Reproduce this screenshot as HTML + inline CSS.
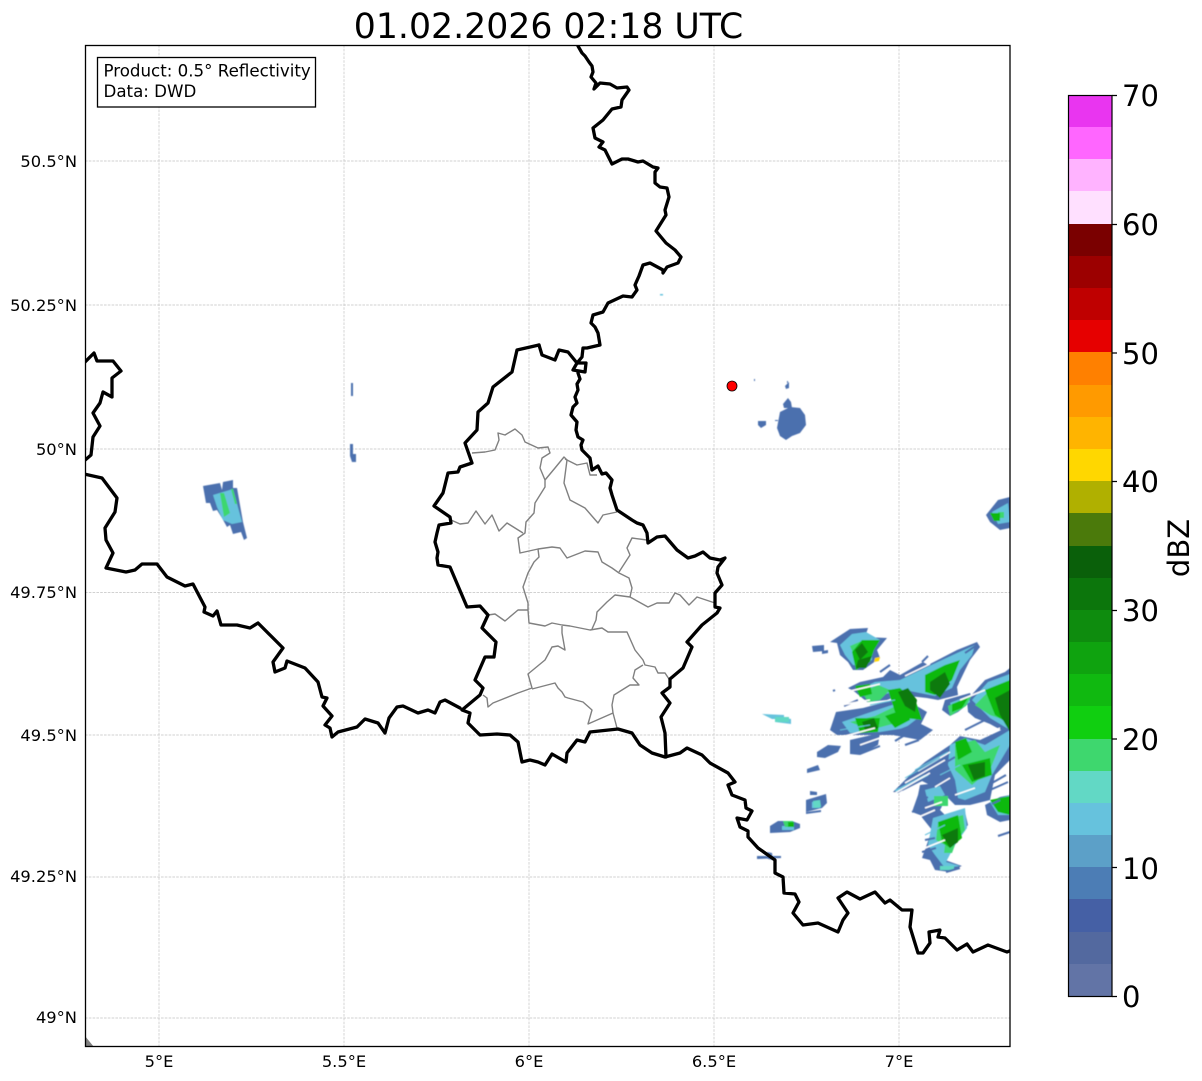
<!DOCTYPE html>
<html><head><meta charset="utf-8"><style>
html,body{margin:0;padding:0;background:#fff}
svg{display:block}
text{font-family:"DejaVu Sans",sans-serif;fill:#000}
.b{fill:none;stroke:#000;stroke-width:3.3;stroke-linejoin:round;stroke-linecap:round}
.g{fill:none;stroke:#808080;stroke-width:1.4;stroke-linejoin:round}
.gr{stroke:#c2c2c2;stroke-width:.7;stroke-dasharray:2.6 1.2}
.t{font-size:16.3px}
.l{font-size:16.67px}
</style></head><body>
<svg width="1202" height="1081" viewBox="0 0 1202 1081" xmlns="http://www.w3.org/2000/svg">
<defs><filter id="s" x="-5%" y="-5%" width="110%" height="110%"><feGaussianBlur stdDeviation="0.45"/></filter></defs>
<rect width="1202" height="1081" fill="#fff"/>
<text x="548.5" y="38" font-size="34.7" text-anchor="middle">01.02.2026 02:18 UTC</text>
<svg x="85.5" y="45.5" width="925" height="1001" viewBox="85.5 45.5 925 1001">
<g class="gr">
<path d="M159 45V1046M344 45V1046M529 45V1046M714 45V1046M899 45V1046"/>
<path d="M85 161H1010M85 305H1010M85 449H1010M85 592.5H1010M85 735H1010M85 877H1010M85 1018H1010"/>
</g>
<!-- radar -->
<g id="radar" filter="url(#s)">
<g fill="#4c70ae">
<polygon points="203,486 220,483 222,490 223,482 233,480 233,488 237,488 243,522 247,538 244,540 241,532 233,534 230,525 227,527 222,518 217,510 213,511 210,503 206,503"/>
<path d="M351 383h2v13h-2zM350 444h3v10h3v8h-4l-2-6z"/>
<polygon points="780,412 790,407 800,408 805,415 806,425 800,433 792,436 786,440 780,436 777,428"/>
<polygon points="758,421 766,421 766,425 761,428 758,425"/>
<polygon points="785,386 789,382 789,388 786,389"/>
<polygon points="783,404 788,398 791,402 792,408 784,408"/>
<path d="M754 379h1v2h-1zM787 381h1v2h-1zM775 420h3v1h-3z"/>
<polygon points="986,515 998,500 1010,497 1010,528 1000,530 990,522"/>
<polygon points="830,642 850,629 868,628 865,637 887,638 877,650 880,658 863,670 853,670 848,662 840,655 837,643"/>
<path d="M812 646l12-1 0 6-11 1zM822 651l6-1v3l-6 1z"/>
<polygon points="848,688 860,682 883,677 890,670 900,675 923,662 928,665 957,650 977,642 980,647 970,660 957,687 958,695 938,700 927,698 900,695 887,700 867,702 855,692"/>
<polygon points="836,712 863,708 893,700 910,702 927,712 921,724 933,730 920,740 893,735 867,735 837,735 830,730"/>
<polygon points="850,740 880,733 878,745 860,755 850,754"/>
<polygon points="817,752 828,745 841,746 838,752 825,758 817,757"/>
<polygon points="807,769 818,765 820,770 807,773"/>
<polygon points="806,800 826,794 827,803 822,808 806,812"/>
<path d="M810 791l7 1v3l-7 0zM806 812l15-2v2l-15 2z"/>
<polygon points="770,826 778,821 792,821 800,824 800,828 790,832 770,833"/>
<path d="M757 856h24v2l-24 1zM767 852l5 1 1 7-5-1z"/>
<polygon points="967,700 985,680 1005,672 1010,668 1010,735 990,724 975,718 968,712"/>
<polygon points="893,792 910,775 925,762 950,745 960,736 980,740 1010,726 1010,760 995,775 990,800 970,805 955,805 940,790 920,780 898,793"/>
<polygon points="920,785 945,782 948,795 940,810 950,820 965,812 968,825 960,835 945,860 962,866 950,872 935,870 930,860 922,858 932,830 920,815 912,812 918,795"/>
<polygon points="945,700 970,693 973,700 958,712 950,716 942,710"/>
<polygon points="985,805 1000,797 1010,795 1010,820 1000,822 987,815"/>
</g>
<g fill="#66c2dd">
<polygon points="213,495 233,489 242,522 232,524 223,520 217,507"/>
<polygon points="840,645 852,634 866,632 880,640 872,652 872,660 860,666 853,665 845,655"/>
<polygon points="858,690 875,682 900,680 925,668 955,654 975,645 972,655 960,670 952,688 935,696 905,690 880,695 866,695"/>
<polygon points="842,722 865,714 895,704 912,706 918,718 905,728 880,732 850,733"/>
<polygon points="972,700 988,682 1010,674 1010,730 990,718"/>
<polygon points="950,745 965,738 985,745 1010,730 1010,745 992,775 985,792 965,800 958,798 955,780 948,765"/>
<polygon points="925,790 940,786 945,795 928,802"/>
<polygon points="933,818 965,808 967,828 955,845 946,862 960,866 945,868 935,855 928,845"/>
<polygon points="950,703 968,696 970,702 955,712"/>
<polygon points="990,802 1010,795 1010,815 998,815"/>
<polygon points="992,512 1008,503 1010,522 998,524"/>
<path d="M660 294h3v1.500h-3zM895 790l35-18-2 4-32 16zM762 714l22 1v4l-12 0zM775 716l16 3v5l-16-2zM812 802h8v6h-8zM782 826h12v4h-12z"/>
</g>
<g fill="#62d8c5">
<path d="M813 801l7-1 1 7-7 1zM775 717h14v5h-14zM940 866h14v4h-14z"/>
</g>
<g fill="#3ed76e">
<polygon points="220,493 224,493 230,513 224,517"/>
<path d="M231 489l2 0 4 15-2 0zM783 821h10v6h-8zM945 845h10l-3 8h-8zM850 646l14-6 3 7-14 6zM998 512h6v6h-6zM934 796h14v10h-14z"/>
<polygon points="862,692 878,685 890,690 880,700 868,702"/>
<polygon points="948,706 972,695 966,706 950,716"/>
<polygon points="850,722 875,716 896,706 906,710 900,722 870,730"/>
<polygon points="975,705 990,690 1010,685 1010,722 990,715"/>
<polygon points="955,745 975,740 985,752 1000,745 990,770 972,785 955,770"/>
<polygon points="938,822 963,815 965,830 950,848 936,840"/>
</g>
<g fill="#10b910">
<polygon points="852,652 862,640 880,640 874,650 870,662 856,670"/>
<polygon points="855,686 870,684 872,694 860,697"/>
<polygon points="888,690 900,688 916,702 922,720 905,718 895,712"/>
<polygon points="925,675 945,665 960,660 952,680 935,695 925,692"/>
<polygon points="855,718 880,718 878,732 860,733"/>
<polygon points="885,716 908,708 910,720 895,728"/>
<polygon points="985,690 1010,680 1010,725 995,715"/>
<polygon points="955,742 966,738 972,752 958,760"/>
<polygon points="962,765 990,758 992,775 972,782"/>
<polygon points="938,822 958,815 962,838 950,848 942,842"/>
<polygon points="990,800 1010,796 1010,815 998,812"/>
<polygon points="952,704 968,698 962,708 952,712"/>
<path d="M990 513h10v8h-6zM788 822h6v5h-6z"/>
</g>
<g fill="#0a7a0a">
<polygon points="855,650 862,643 868,652 860,660"/>
<polygon points="858,660 872,656 866,668 856,668"/>
<polygon points="930,682 945,672 950,684 940,698 930,690"/>
<polygon points="898,692 908,688 917,700 915,712 905,706"/>
<polygon points="862,722 874,718 878,728 866,732"/>
<polygon points="968,765 985,762 985,776 974,780"/>
<polygon points="995,698 1010,690 1010,732 1000,715"/>
<polygon points="942,835 958,828 958,842 950,848"/>
</g>
<g stroke-width="2" fill="none" stroke="#4c70ae">
<path d="M880 672l10-7M922 662l6-6M835 690l-2 1M977 645l-12 8M858 700l-14 6M900 730l20-8M885 705l-20 5M902 790l30-15M925 775l30-18M916 803l12-6M985 720l-20 10M912 812l18-8M1000 800l-8 4M1010 832l-12 4M930 803l-16 5M905 735l-10 6M880 746l-20 8M905 745l14-5M1006 775l-14 8M960 868l-14 4"/>
<path d="M925 840l10-2M922 852l14-4M990 790l18-8"/>
</g>
<g stroke-width="1.500" fill="none" stroke="#fff">
<path d="M890 796L930 773M905 783L945 760M918 771L950 752M935 787L950 778M846 692L880 684M905 676L930 664M930 660L955 648M838 738L875 728M835 706L870 700M960 700L985 690M955 795L975 788M912 820L935 810M920 850L945 840M925 808L942 802M985 735L1000 728M960 868L975 862M995 785L1010 778M860 745L880 738"/>
</g>
<g stroke-width="1" fill="none" stroke="#66c2dd">
<path d="M905 778L940 758M915 770L948 752M940 775L960 765M870 705L895 700M840 730L870 725M925 835L945 825"/>
</g>
<path d="M875 658l5-1-1 4-5 1z" fill="#ffd700"/>
</g>
<!-- borders -->
<path class="g" d="M472 453L485 452 495 450 499 440 498 433 505 435 515 429 522 435 525 442 538 448 548 447 550 453 542 458 540 468 545 480 545 487 535 503 534 513 526 522 525 533 518 538 520 553 538 549 552 547 560 548 567 558 585 551 598 552 602 562 612 568 619 573 629 578 632 588 630 597"/>
<path class="g" d="M545 480L555 468 564 457 567 460 564 483 570 500 585 508 598 523 603 515 617 512"/>
<path class="g" d="M565 459L577 465 587 463 590 475 597 475"/>
<path class="g" d="M451 520L460 524 468 523 476 511 485 524 492 515 499 531 507 523 523 533"/>
<path class="g" d="M647 540L632 538 627 548 630 555 619 572"/>
<path class="g" d="M538 549L539 557 534 562 528 573 523 587 528 603 528 610 529 623 545 626 552 623 562 625 570 626 590 630 602 628 608 632 627 632 635 650 643 660 645 665 655 667 658 673 665 673 669 679"/>
<path class="g" d="M592 629L596 620 597 612 607 602 615 595 630 597 648 607 657 603 669 603 675 593 680 595 689 605 697 597 715 603"/>
<path class="g" d="M562 626L562 633 565 650 558 646 552 647 545 660 528 674 532 688 518 693 493 703 488 707 487 698 483 695"/>
<path class="g" d="M532 689L555 683 558 688 562 692 565 697 568 698 583 702 592 710 588 724 613 713 617 728"/>
<path class="g" d="M613 713L612 705 614 695 630 685 639 685 633 678 635 670 643 665"/>
<path class="g" d="M528 610L518 610 505 621 495 614 488 615"/>
<path class="b" d="M578 46L582 53 585 56 589 62 592 66 593 72 591 77 596 83 594 89 597 86 600 83 610 84 617 88 627 87 629 90 622 100 621 107 612 109 603 120 593 128 595 138 603 142 599 147 605 150 612 164 622 159 628 159 638 162 643 161 653 167 658 168 655 172 655 183 660 187 667 188 669 197 665 210 666 215 656 231 666 243 675 250 681 257 678 263 667 267 663 273 663 270 650 263 643 265 639 276 635 285 637 290 632 297 623 296 608 303 603 312 593 315 591 323 595 327 598 333 600 345 587 348 583 348 582 357 577 363 573 370 585 372 586 363 577 363"/>
<path class="b" d="M578 373L580 379 577 384 578 390 575 397 577 403 573 407 571 415 577 422 576 430 578 437 583 440 581 445 582 450 590 458 592 470 598 466 602 474 606 473 612 480 610 488 612 495 617 510 632 520 637 523 643 525 647 533 648 543 657 537 665 536 677 550 688 558 695 556 703 552 710 558 720 560 725 558 718 567 717 573 722 585 715 593 715 607 720 608 717 613 702 625 687 642 692 647 683 668 670 679 670 687 662 693 670 703 661 717 665 733 666 757"/>
<path class="b" d="M539 345L517 350 512 372 493 387 488 403 478 412 477 430 465 443 472 463 460 467 458 472 448 473 443 493 434 506 450 517 451 523 439 525 437 533 435 542 438 552 437 558 438 565 450 567 467 607 480 606 488 615 482 628 496 642 494 657 485 657 475 680 483 688 480 695 462 710 470 713 468 723 480 735 497 734 510 735 518 742 522 762 530 760 538 762 545 765 552 754 566 762 567 753 577 740 585 742 590 732 618 729 632 733 640 745 652 753 665 757 680 753 687 748 702 755 710 763 728 773 735 782 728 785 732 795 745 800 746 808 752 811 747 820 737 818 740 827 748 831 748 837 758 848 775 860 775 873 783 877 784 893 795 894 799 902 793 913 803 925 818 923 838 932 843 920 848 913 838 898 847 892 860 899 875 892 885 903 890 900 902 910 912 910 910 927 918 953 923 953 930 943 929 932 940 930 938 937 945 938 957 950 967 944 973 952 988 945 1007 952 1012 950"/>
<path class="b" d="M539 345L542 355 555 360 559 350 568 352 577 363"/>
<path class="b" d="M84 363L94 353 97 361 113 361 121 371 112 378 112 397 103 392 100 403 93 413 100 426 93 437 91 455 84 461"/>
<path class="b" d="M84 474L102 478 117 498 115 512 105 528 106 540 113 553 106 568 126 572 135 570 142 564 157 564 167 577 185 586 193 584 205 607 204 612 213 616 217 611 221 625 237 625 250 628 258 623 270 635 283 648 273 662 275 672 285 668 287 661 305 668 318 682 322 697 327 698 323 706 332 716 325 725 330 728 332 737 338 732 357 727 365 719 378 723 385 733 389 718 397 707 403 706 418 713 428 710 435 713 440 702 445 700 460 708"/>
<path d="M85 1036L85 1047 94 1047Z" fill="#808080"/>
<circle cx="732" cy="386" r="5" fill="#f00" stroke="#000" stroke-width=".8"/>
</svg>
<rect x="85.5" y="45.500" width="924.500" height="1001" fill="none" stroke="#000" stroke-width="1.300"/>
<rect x="97.500" y="57.500" width="218" height="49.500" fill="#fff" stroke="#000" stroke-width="1.300"/>
<text class="l" x="103.500" y="76.500">Product: 0.5° Reflectivity</text>
<text class="l" x="103.500" y="97">Data: DWD</text>
<g class="t" text-anchor="end">
<text x="77" y="167">50.5°N</text>
<text x="77" y="311">50.25°N</text>
<text x="77" y="455">50°N</text>
<text x="77" y="598">49.75°N</text>
<text x="77" y="741">49.5°N</text>
<text x="77" y="882">49.25°N</text>
<text x="77" y="1023">49°N</text>
</g>
<g class="t" text-anchor="middle">
<text x="159" y="1067">5°E</text>
<text x="344" y="1067">5.5°E</text>
<text x="529" y="1067">6°E</text>
<text x="714" y="1067">6.5°E</text>
<text x="899" y="1067">7°E</text>
</g>
<!-- colorbar -->
<g shape-rendering="crispEdges">
<rect x="1068" y="95" width="44" height="33" fill="#e935f0"/>
<rect x="1068" y="127" width="44" height="33" fill="#ff66ff"/>
<rect x="1068" y="159" width="44" height="33" fill="#ffb3ff"/>
<rect x="1068" y="191" width="44" height="33" fill="#ffe0ff"/>
<rect x="1068" y="224" width="44" height="33" fill="#7a0000"/>
<rect x="1068" y="256" width="44" height="33" fill="#9c0000"/>
<rect x="1068" y="288" width="44" height="33" fill="#bf0000"/>
<rect x="1068" y="320" width="44" height="33" fill="#e60000"/>
<rect x="1068" y="352" width="44" height="33" fill="#ff8000"/>
<rect x="1068" y="385" width="44" height="33" fill="#ff9a00"/>
<rect x="1068" y="417" width="44" height="33" fill="#ffb400"/>
<rect x="1068" y="449" width="44" height="33" fill="#ffd700"/>
<rect x="1068" y="481" width="44" height="33" fill="#b0b000"/>
<rect x="1068" y="513" width="44" height="33" fill="#4b7a0b"/>
<rect x="1068" y="546" width="44" height="33" fill="#0a600a"/>
<rect x="1068" y="578" width="44" height="33" fill="#0c760c"/>
<rect x="1068" y="610" width="44" height="33" fill="#0e8c0e"/>
<rect x="1068" y="642" width="44" height="33" fill="#0fa30f"/>
<rect x="1068" y="674" width="44" height="33" fill="#10b910"/>
<rect x="1068" y="706" width="44" height="33" fill="#10cf10"/>
<rect x="1068" y="739" width="44" height="33" fill="#3ed76e"/>
<rect x="1068" y="771" width="44" height="33" fill="#62d8c5"/>
<rect x="1068" y="803" width="44" height="33" fill="#66c2dd"/>
<rect x="1068" y="835" width="44" height="33" fill="#5ca0c8"/>
<rect x="1068" y="867" width="44" height="33" fill="#4c7db5"/>
<rect x="1068" y="899" width="44" height="33" fill="#4560a5"/>
<rect x="1068" y="932" width="44" height="33" fill="#53699f"/>
<rect x="1068" y="964" width="44" height="33" fill="#6274a6"/>
</g>
<rect x="1068.500" y="95.500" width="43.500" height="901" fill="none" stroke="#000" stroke-width="1.200"/>
<path d="M1112 95.500h5M1112 224.500h5M1112 353h5M1112 481.500h5M1112 610.500h5M1112 739h5M1112 867.500h5M1112 996.500h5" stroke="#000" stroke-width="1.200"/>
<g font-size="29">
<text x="1122" y="106">70</text>
<text x="1122" y="235">60</text>
<text x="1122" y="364">50</text>
<text x="1122" y="492">40</text>
<text x="1122" y="621">30</text>
<text x="1122" y="750">20</text>
<text x="1122" y="879">10</text>
<text x="1122" y="1007">0</text>
</g>
<text transform="translate(1189 548) rotate(-90)" font-size="29" text-anchor="middle">dBZ</text>
</svg>
</body></html>
